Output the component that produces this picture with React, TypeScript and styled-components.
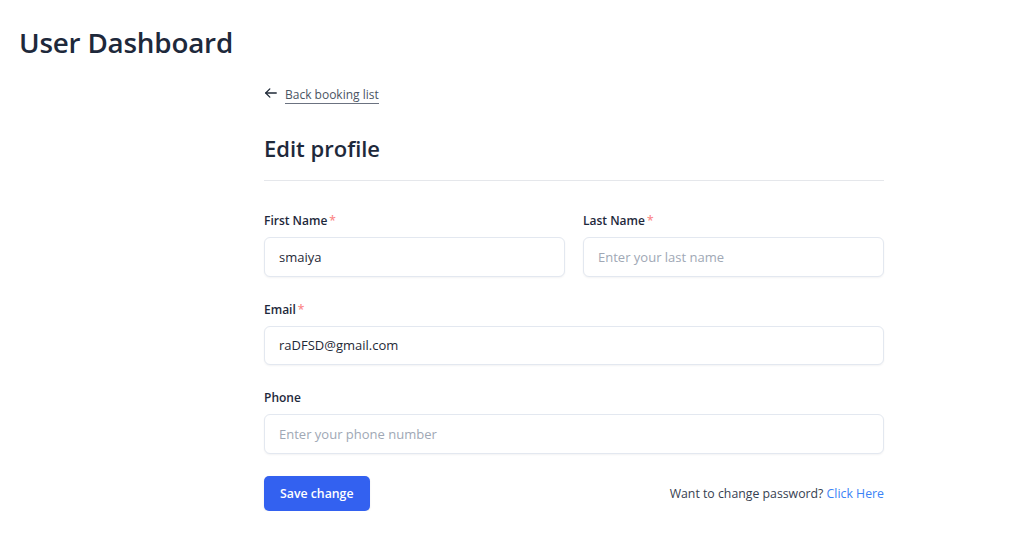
import React from "react";
import styled, { createGlobalStyle } from "styled-components";

const Global = createGlobalStyle`
  html, body { margin: 0; padding: 0; background: #ffffff; }
  body { font-family: "Open Sans", "Noto Sans", sans-serif; color: #1f2a3d; }
  * { box-sizing: border-box; }
`;

const Page = styled.div`
  padding: 22px 0 0 19px;
`;

const Title = styled.h1`
  margin: 0;
  font-size: 27.8px;
  line-height: 40px;
  font-weight: 600;
  color: #1e293b;
  letter-spacing: -0.2px;
`;

const Content = styled.div`
  width: 620px;
  margin-left: 245px;
  padding-top: 21px;
`;

const BackLink = styled.a`
  display: inline-flex;
  align-items: center;
  gap: 7px;
  font-size: 12px;
  color: #4b5563;
  text-decoration: none;
  cursor: pointer;
  height: 20px;
`;

const BackText = styled.span`
  border-bottom: 1px solid #6b7280;
  line-height: 16px;
  padding-top: 4px;
`;

const Heading = styled.h2`
  margin: 28px 0 0;
  font-size: 22px;
  line-height: 30px;
  font-weight: 600;
  color: #1e293b;
  padding-bottom: 17px;
  border-bottom: 1px solid #e5e7eb;
`;

const Form = styled.form`
  display: grid;
  grid-template-columns: 1fr 1fr;
  column-gap: 18px;
  row-gap: 25px;
  margin-top: 32px;
`;

const Field = styled.div<{ $full?: boolean }>`
  display: flex;
  flex-direction: column;
  gap: 8px;
  grid-column: ${(p) => (p.$full ? "1 / -1" : "auto")};
`;

const Label = styled.label`
  font-size: 12px;
  line-height: 16px;
  font-weight: 600;
  color: #1e293b;
`;

const Star = styled.span`
  color: #fb8a8a;
  margin-left: 2px;
`;

const Input = styled.input`
  height: 39.5px;
  width: 100%;
  border: 1px solid #e3e8f0;
  border-radius: 6px;
  box-shadow: 0 1px 2px rgba(15, 23, 42, 0.05);
  padding: 0 14px;
  font-family: inherit;
  font-size: 13px;
  color: #1f2937;
  outline: none;
  background: #fff;
  &::placeholder { color: #a0a8b5; }
`;

const Footer = styled.div`
  display: flex;
  justify-content: space-between;
  align-items: center;
  margin-top: 22px;
`;

const SaveButton = styled.button`
  height: 35px;
  padding: 0 16px;
  background: #3361f0;
  color: #fff;
  border: none;
  border-radius: 5px;
  font-family: inherit;
  font-size: 12.3px;
  font-weight: 600;
  box-shadow: 0 1px 2px rgba(15, 23, 42, 0.1);
  cursor: pointer;
`;

const Hint = styled.span`
  font-size: 12.3px;
  color: #374151;
`;

const LinkText = styled.a`
  color: #3b82f6;
  text-decoration: none;
  cursor: pointer;
`;

export default function App() {
  return (
    <>
      <Global />
      <Page>
        <Title>User Dashboard</Title>
        <Content>
          <BackLink>
            <svg width="14" height="14" viewBox="0 0 24 24" fill="none" stroke="#1f2937" strokeWidth="2.2" strokeLinecap="round" strokeLinejoin="round">
              <path d="M21 12H3" />
              <path d="M10 5l-7 7 7 7" />
            </svg>
            <BackText>Back booking list</BackText>
          </BackLink>
          <Heading>Edit profile</Heading>
          <Form onSubmit={(e) => e.preventDefault()}>
            <Field>
              <Label>First Name<Star>*</Star></Label>
              <Input defaultValue="smaiya" />
            </Field>
            <Field>
              <Label>Last Name<Star>*</Star></Label>
              <Input placeholder="Enter your last name" />
            </Field>
            <Field $full>
              <Label>Email<Star>*</Star></Label>
              <Input defaultValue="raDFSD@gmail.com" />
            </Field>
            <Field $full>
              <Label>Phone</Label>
              <Input placeholder="Enter your phone number" />
            </Field>
          </Form>
          <Footer>
            <SaveButton type="button">Save change</SaveButton>
            <Hint>
              Want to change password? <LinkText>Click Here</LinkText>
            </Hint>
          </Footer>
        </Content>
      </Page>
    </>
  );
}
